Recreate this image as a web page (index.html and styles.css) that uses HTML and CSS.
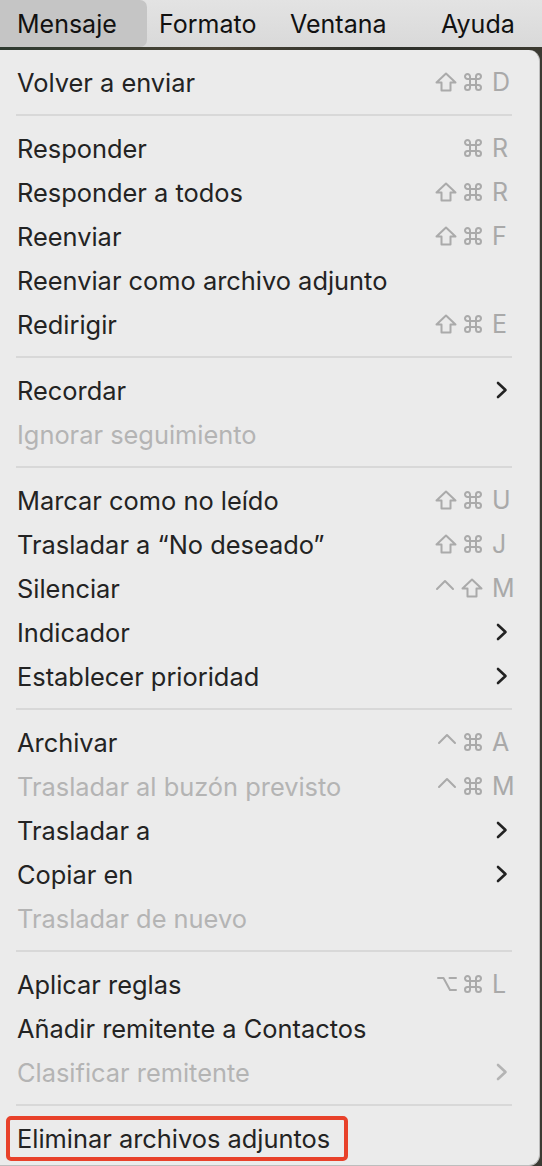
FILE: index.html
```html
<!DOCTYPE html>
<html lang="es">
<head>
<meta charset="utf-8">
<title>Mensaje</title>
<link rel="stylesheet" href="styles.css">
</head>
<body>
<svg width="0" height="0" style="position:absolute">
  <defs>
    <symbol id="shift" viewBox="0 0 22 20"><path d="M11 1.5 L20.5 10.5 H15.5 V18.5 H6.5 V10.5 H1.5 Z"/></symbol>
    <symbol id="cmd" viewBox="0 0 20 20"><path d="M7 7 V4.5 A2.5 2.5 0 1 0 4.5 7 H15.5 A2.5 2.5 0 1 0 13 4.5 V15.5 A2.5 2.5 0 1 0 15.5 13 H4.5 A2.5 2.5 0 1 0 7 15.5 Z"/></symbol>
    <symbol id="ctrl" viewBox="0 0 20 20"><path d="M2 11 L10 3 L18 11"/></symbol>
    <symbol id="opt" viewBox="0 0 20 20"><path d="M1 4 H6.5 L13 16 H19 M12.5 4 H19"/></symbol>
    <symbol id="chev" viewBox="0 0 12 18"><path d="M2 2 L9.5 9 L2 16"/></symbol>
  </defs>
</svg>
<div class="screen">
  <div class="menubar">
    <div class="mb-item active">Mensaje</div>
    <div class="mb-item w2">Formato</div>
    <div class="mb-item w3">Ventana</div>
    <div class="mb-item">Ayuda</div>
  </div>
  <div class="strip"></div>
  <div class="menu">
    <div class="row"><span class="label">Volver a enviar</span><span class="sc"><span class="mods"><svg class="ic sh"><use href="#shift"/></svg><svg class="ic"><use href="#cmd"/></svg></span><span class="key">D</span></span></div>
    <div class="sep"></div>
    <div class="row"><span class="label">Responder</span><span class="sc"><span class="mods"><svg class="ic"><use href="#cmd"/></svg></span><span class="key">R</span></span></div>
    <div class="row"><span class="label">Responder a todos</span><span class="sc"><span class="mods"><svg class="ic sh"><use href="#shift"/></svg><svg class="ic"><use href="#cmd"/></svg></span><span class="key">R</span></span></div>
    <div class="row"><span class="label">Reenviar</span><span class="sc"><span class="mods"><svg class="ic sh"><use href="#shift"/></svg><svg class="ic"><use href="#cmd"/></svg></span><span class="key">F</span></span></div>
    <div class="row"><span class="label">Reenviar como archivo adjunto</span></div>
    <div class="row"><span class="label">Redirigir</span><span class="sc"><span class="mods"><svg class="ic sh"><use href="#shift"/></svg><svg class="ic"><use href="#cmd"/></svg></span><span class="key">E</span></span></div>
    <div class="sep"></div>
    <div class="row"><span class="label">Recordar</span><svg class="chev"><use href="#chev"/></svg></div>
    <div class="row disabled"><span class="label">Ignorar seguimiento</span></div>
    <div class="sep"></div>
    <div class="row"><span class="label">Marcar como no leído</span><span class="sc"><span class="mods"><svg class="ic sh"><use href="#shift"/></svg><svg class="ic"><use href="#cmd"/></svg></span><span class="key">U</span></span></div>
    <div class="row"><span class="label">Trasladar a “No deseado”</span><span class="sc"><span class="mods"><svg class="ic sh"><use href="#shift"/></svg><svg class="ic"><use href="#cmd"/></svg></span><span class="key">J</span></span></div>
    <div class="row"><span class="label">Silenciar</span><span class="sc"><span class="mods"><svg class="ic"><use href="#ctrl"/></svg><svg class="ic sh"><use href="#shift"/></svg></span><span class="key">M</span></span></div>
    <div class="row"><span class="label">Indicador</span><svg class="chev"><use href="#chev"/></svg></div>
    <div class="row"><span class="label">Establecer prioridad</span><svg class="chev"><use href="#chev"/></svg></div>
    <div class="sep"></div>
    <div class="row"><span class="label">Archivar</span><span class="sc"><span class="mods"><svg class="ic"><use href="#ctrl"/></svg><svg class="ic"><use href="#cmd"/></svg></span><span class="key">A</span></span></div>
    <div class="row disabled"><span class="label">Trasladar al buzón previsto</span><span class="sc"><span class="mods"><svg class="ic"><use href="#ctrl"/></svg><svg class="ic"><use href="#cmd"/></svg></span><span class="key">M</span></span></div>
    <div class="row"><span class="label">Trasladar a</span><svg class="chev"><use href="#chev"/></svg></div>
    <div class="row"><span class="label">Copiar en</span><svg class="chev"><use href="#chev"/></svg></div>
    <div class="row disabled"><span class="label">Trasladar de nuevo</span></div>
    <div class="sep"></div>
    <div class="row"><span class="label">Aplicar reglas</span><span class="sc"><span class="mods"><svg class="ic"><use href="#opt"/></svg><svg class="ic"><use href="#cmd"/></svg></span><span class="key">L</span></span></div>
    <div class="row"><span class="label">Añadir remitente a Contactos</span></div>
    <div class="row disabled"><span class="label">Clasificar remitente</span><svg class="chev"><use href="#chev"/></svg></div>
    <div class="sep"></div>
    <div class="row marked"><span class="label">Eliminar archivos adjuntos</span><span class="highlight"></span></div>
  </div>
</div>
</body>
</html>
```

FILE: styles.css
```css
* { box-sizing: border-box; }
html, body {
  margin: 0;
  padding: 0;
}
body {
  width: 542px;
  height: 1166px;
  overflow: hidden;
  background: #3b3a33;
  font-family: Inter, "Liberation Sans", Arial, sans-serif;
}
.screen {
  width: 542px;
  height: 1166px;
  display: flex;
  flex-direction: column;
}
.menubar {
  height: 47px;
  background: linear-gradient(#e3e3e3, #d9d9d9);
  display: flex;
  align-items: stretch;
  font-size: 25px;
  color: #111;
}
.mb-item {
  display: flex;
  align-items: center;
  white-space: nowrap;
}
.mb-item.active {
  width: 147px;
  padding-left: 17px;
  margin-right: 12px;
  background: #c5c5c5;
  border-radius: 0 7px 7px 0;
}
.mb-item.w2 { width: 131px; }
.mb-item.w3 { width: 151px; }
.strip {
  height: 3px;
  background: linear-gradient(90deg, #2e3a30, #4a4436 40%, #2c2f2a 70%, #3c3a30);
}
.menu {
  width: 540px;
  flex: 1;
  background: #ebebeb;
  border-right: 1px solid #bdbdbd;
  border-bottom: 1px solid #bdbdbd;
  border-radius: 0 11px 11px 0;
  padding: 10px 0 3px 0;
  display: flex;
  flex-direction: column;
}
.row {
  position: relative;
  height: 44px;
  flex: none;
  display: flex;
  align-items: center;
  padding-left: 17px;
  font-size: 25.4px;
  color: #232323;
}
.row.disabled { color: #b4b4b4; }
.label { flex: 1; white-space: nowrap; }
.sc {
  display: flex;
  align-items: center;
  color: #a9a9a9;
  margin-right: 23px;
}
.mods {
  display: flex;
  align-items: center;
  gap: 6px;
}
.ic {
  width: 20px;
  height: 20px;
  fill: none;
  stroke: #aaaaaa;
  stroke-width: 2;
  stroke-linejoin: round;
  stroke-linecap: round;
}
.ic.sh { width: 22px; }
.key {
  width: 24px;
  margin-left: 9px;
  font-size: 25px;
}
.chev {
  width: 12px;
  height: 18px;
  margin-right: 31px;
  fill: none;
  stroke: #232323;
  stroke-width: 2.6;
  stroke-linecap: round;
  stroke-linejoin: round;
}
.row.disabled .chev { stroke: #b4b4b4; }
.sep {
  height: 22px;
  flex: none;
  display: flex;
  align-items: center;
  padding: 0 27px 0 16px;
}
.sep::before {
  content: "";
  flex: 1;
  height: 2px;
  background: #d8d8d8;
}
.highlight {
  position: absolute;
  left: 6px;
  top: 0;
  width: 342px;
  height: 45px;
  border: 4px solid #e8412a;
  border-radius: 5px;
}
```
